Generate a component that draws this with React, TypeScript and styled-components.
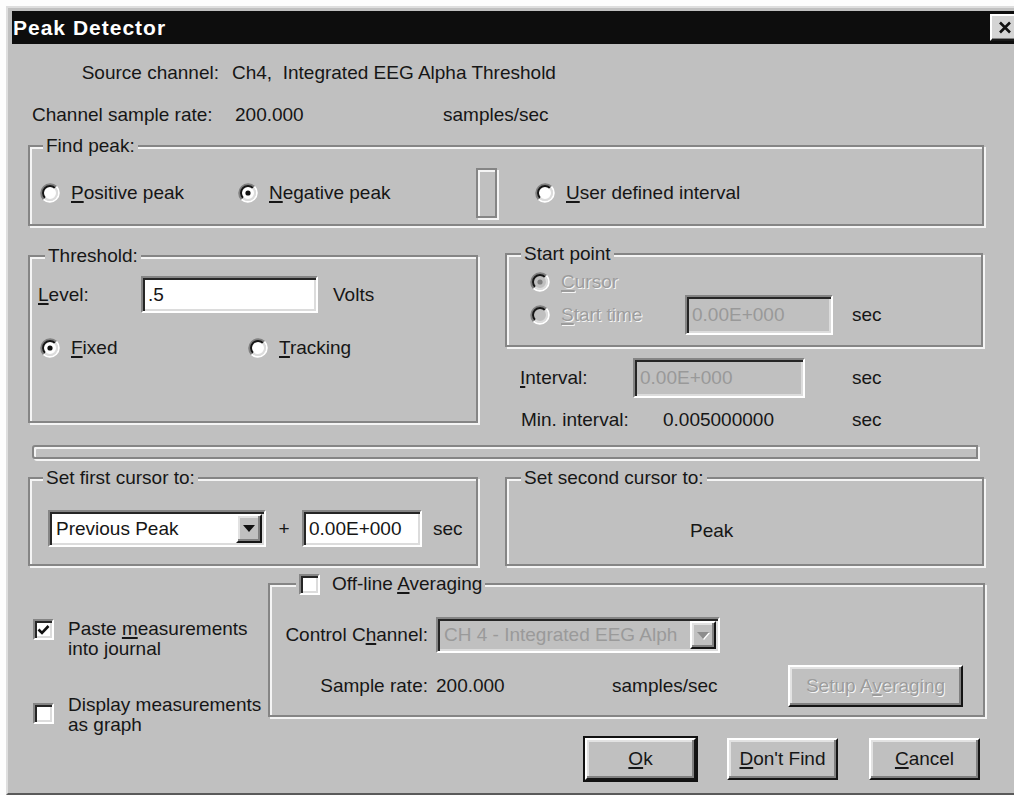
import React from "react";
import styled, { createGlobalStyle, css } from "styled-components";

const FACE = "#c0c0c0";
const SHADOW = "#858585";
const LIGHT = "#f4f4f4";
const INK = "#161616";
const MUTED = "#8c8c8c";

const GlobalStyle = createGlobalStyle`
  html, body { margin: 0; padding: 0; background: #fdfdfd; overflow: hidden; }
  body { font-family: "Liberation Sans", Arial, sans-serif; }
`;

const Window = styled.div`
  box-sizing: border-box;
  width: 1030px;
  height: 789px;
  margin: 6px 0 0 6px;
  padding: 3px 4px 0;
  display: flex;
  flex-direction: column;
  background: ${FACE};
  border: 2px solid #dedede;
  border-right-color: #3a3a3a;
  border-bottom-color: #5a5a5a;
  color: ${INK};
  font-size: 19px;
  line-height: 22px;
`;

const TitleBar = styled.div`
  flex: none;
  height: 33px;
  display: flex;
  align-items: center;
  justify-content: space-between;
  padding-left: 1px;
  background: #0d0d0d;
`;

const Title = styled.span`
  color: #fff;
  font-weight: 700;
  font-size: 21px;
  letter-spacing: 1px;
`;

const CloseButton = styled.span`
  box-sizing: border-box;
  width: 30px;
  height: 27px;
  margin-right: 10px;
  display: flex;
  align-items: center;
  justify-content: center;
  background: #d4d4d4;
  border: 2px solid;
  border-color: #fff #1a1a1a #1a1a1a #fff;
  box-shadow: inset -1px -1px 0 #808080;
`;

const Body = styled.div`
  flex: 1;
  display: flex;
  flex-direction: column;
  align-items: flex-start;
`;

const InfoRow = styled.div<{ $top: number; $left?: number; $gap?: number }>`
  display: flex;
  align-items: center;
  height: 22px;
  margin-top: ${(p) => p.$top}px;
  padding-left: ${(p) => p.$left ?? 0}px;
  gap: ${(p) => p.$gap ?? 0}px;
  white-space: nowrap;
`;

const InfoCell = styled.span<{ $w?: number; $right?: boolean }>`
  flex: none;
  ${(p) => p.$w && css`width: ${p.$w}px;`}
  text-align: ${(p) => (p.$right ? "right" : "left")};
`;

const GroupBox = styled.div<{ $w: number; $h: number; $top?: number; $left?: number }>`
  position: relative;
  flex: none;
  box-sizing: border-box;
  width: ${(p) => p.$w}px;
  height: ${(p) => p.$h}px;
  margin-top: ${(p) => p.$top ?? 0}px;
  margin-left: ${(p) => p.$left ?? 0}px;
  border: 2px solid ${SHADOW};
  box-shadow: inset 2px 2px 0 ${LIGHT}, 2px 2px 0 ${LIGHT};
`;

// group caption sits over the top edge of its frame
const Caption = styled.span<{ $left: number }>`
  position: absolute;
  top: -12px;
  left: ${(p) => p.$left}px;
  height: 22px;
  display: flex;
  align-items: center;
  gap: 12px;
  padding: 0 3px;
  background: ${FACE};
  white-space: nowrap;
`;

const ChoiceRow = styled.div<{ $top?: number; $left?: number; $h?: number }>`
  display: flex;
  align-items: center;
  height: ${(p) => p.$h ?? 22}px;
  margin-top: ${(p) => p.$top ?? 0}px;
  padding-left: ${(p) => p.$left ?? 0}px;
  white-space: nowrap;
`;

const RadioItem = styled.label<{ $w?: number }>`
  flex: none;
  display: flex;
  align-items: center;
  gap: 11px;
  ${(p) => p.$w && css`width: ${p.$w}px;`}
`;

const Notch = styled.span`
  flex: none;
  box-sizing: border-box;
  width: 21px;
  height: 50px;
  margin-right: 38px;
  border: 2px solid ${SHADOW};
  box-shadow: inset 2px 2px 0 ${LIGHT}, 2px 2px 0 ${LIGHT};
`;

const FieldLabel = styled.span<{ $w: number; $right?: boolean }>`
  flex: none;
  box-sizing: border-box;
  width: ${(p) => p.$w}px;
  ${(p) =>
    p.$right &&
    css`
      text-align: right;
      padding-right: 8px;
    `}
`;

const sunken = css`
  border: 2px solid;
  border-color: ${SHADOW} #fff #fff ${SHADOW};
  box-shadow: inset 2px 2px 0 #262626, inset -2px -2px 0 #dcdcdc;
`;

const raised = css`
  border: 2px solid;
  border-color: #fff #141414 #141414 #fff;
  box-shadow: inset -2px -2px 0 #808080, inset 2px 2px 0 #e2e2e2;
`;

const TextField = styled.span<{ $w: number; $h: number; $disabled?: boolean }>`
  flex: none;
  box-sizing: border-box;
  width: ${(p) => p.$w}px;
  height: ${(p) => p.$h}px;
  display: flex;
  align-items: center;
  padding-left: 5px;
  background: ${(p) => (p.$disabled ? FACE : "#fff")};
  color: ${(p) => (p.$disabled ? "#999" : INK)};
  ${sunken}
`;

const Unit = styled.span<{ $left: number }>`
  flex: none;
  margin-left: ${(p) => p.$left}px;
`;

const Columns = styled.div<{ $top: number; $h?: number }>`
  flex: none;
  display: flex;
  align-items: flex-start;
  margin-top: ${(p) => p.$top}px;
  ${(p) => p.$h && css`height: ${p.$h}px;`}
`;

const Column = styled.div<{ $left: number; $w: number }>`
  display: flex;
  flex-direction: column;
  align-items: flex-start;
  width: ${(p) => p.$w}px;
  margin-left: ${(p) => p.$left}px;
`;

const Groove = styled.div`
  flex: none;
  box-sizing: border-box;
  width: 946px;
  height: 14px;
  margin: 14px 0 0 20px;
  border: 2px solid ${SHADOW};
  border-radius: 3px 0 0 3px;
  box-shadow: inset 2px 2px 0 ${LIGHT}, 2px 2px 0 ${LIGHT};
`;

const Combo = styled.span<{ $w: number; $h: number; $disabled?: boolean }>`
  flex: none;
  box-sizing: border-box;
  width: ${(p) => p.$w}px;
  height: ${(p) => p.$h}px;
  display: flex;
  padding: 2px;
  background: ${(p) => (p.$disabled ? FACE : "#fff")};
  color: ${(p) => (p.$disabled ? "#9a9a9a" : INK)};
  ${sunken}
`;

const ComboText = styled.span`
  flex: 1;
  display: flex;
  align-items: center;
  padding-left: 4px;
  white-space: nowrap;
`;

const ComboArrow = styled.span<{ $disabled?: boolean }>`
  flex: none;
  box-sizing: border-box;
  width: 26px;
  display: flex;
  align-items: center;
  justify-content: center;
  background: ${FACE};
  ${raised}

  &::after {
    content: "";
    border-left: 6px solid transparent;
    border-right: 6px solid transparent;
    border-top: 7px solid ${(p) => (p.$disabled ? MUTED : "#111")};
    ${(p) => p.$disabled && css`filter: drop-shadow(1px 1px 0 #fff);`}
  }
`;

const Plus = styled.span`
  flex: none;
  width: 36px;
  text-align: center;
`;

const ReadOut = styled.div`
  padding: 41px 0 0 183px;
`;

const CheckRow = styled.label<{ $top: number; $left: number }>`
  display: flex;
  align-items: flex-start;
  gap: 14px;
  margin-top: ${(p) => p.$top}px;
  padding-left: ${(p) => p.$left}px;
  line-height: 20px;
`;

const CheckBox = styled.span<{ $top?: number }>`
  flex: none;
  box-sizing: border-box;
  width: 21px;
  height: 21px;
  margin-top: ${(p) => p.$top ?? 0}px;
  display: flex;
  align-items: center;
  justify-content: center;
  background: #fff;
  ${sunken}
`;

const ButtonRow = styled.div`
  box-sizing: border-box;
  width: 100%;
  margin-top: 21px;
  padding-right: 5px;
  display: flex;
  justify-content: flex-end;
  gap: 31px;
`;

const PushButton = styled.button<{ $w: number; $h?: number; $default?: boolean }>`
  flex: none;
  box-sizing: border-box;
  width: ${(p) => p.$w}px;
  height: ${(p) => p.$h ?? 42}px;
  padding: 0;
  display: flex;
  align-items: center;
  justify-content: center;
  font: inherit;
  color: ${INK};
  background: ${FACE};
  ${raised}
  ${(p) => p.$default && css`outline: 2px solid #111;`}
`;

const Dim = styled.span`
  color: #9c9c9c;
  text-shadow: 1px 1px 0 #f6f6f6;
`;

const Key = styled.u`
  text-decoration-thickness: 1.5px;
  text-underline-offset: 2px;
`;

function Radio({ checked, disabled }: { checked?: boolean; disabled?: boolean }) {
  return (
    <svg width="20" height="20" viewBox="0 0 20 20" style={{ flex: "none" }}>
      <circle cx="10" cy="10" r="7" fill={disabled ? FACE : "#fff"} />
      <path d="M3.64 16.36A9 9 0 0 1 16.36 3.64" stroke="#808080" strokeWidth="2" fill="none" />
      <path d="M16.36 3.64A9 9 0 0 1 3.64 16.36" stroke="#fff" strokeWidth="2" fill="none" />
      <path d="M5.05 14.95A7 7 0 0 1 14.95 5.05" stroke="#161616" strokeWidth="2" fill="none" />
      <path d="M14.95 5.05A7 7 0 0 1 5.05 14.95" stroke="#dcdcdc" strokeWidth="2" fill="none" />
      {checked && <circle cx="10" cy="10" r="2.6" fill={disabled ? "#808080" : "#111"} />}
    </svg>
  );
}

function Check({ on, top }: { on?: boolean; top?: number }) {
  return (
    <CheckBox $top={top}>
      {on && (
        <svg width="13" height="12" viewBox="0 0 13 12">
          <path d="M1.5 5.5 L5 9 L11.5 2" stroke="#111" strokeWidth="2.6" fill="none" />
        </svg>
      )}
    </CheckBox>
  );
}

export default function App() {
  return (
    <>
      <GlobalStyle />
      <Window>
        <TitleBar>
          <Title>Peak Detector</Title>
          <CloseButton>
            <svg width="14" height="13" viewBox="0 0 14 13">
              <path d="M2 1.5 L12 11.5 M12 1.5 L2 11.5" stroke="#111" strokeWidth="2.6" />
            </svg>
          </CloseButton>
        </TitleBar>

        <Body>
          <InfoRow $top={18} $gap={13}>
            <InfoCell $w={207} $right>
              Source channel:
            </InfoCell>
            <InfoCell>Ch4,{"\u00a0"} Integrated EEG Alpha Threshold</InfoCell>
          </InfoRow>
          <InfoRow $top={20} $left={20}>
            <InfoCell $w={203}>Channel sample rate:</InfoCell>
            <InfoCell $w={208}>200.000</InfoCell>
            <InfoCell>samples/sec</InfoCell>
          </InfoRow>

          <GroupBox $w={956} $h={81} $top={19} $left={16}>
            <Caption $left={13}>Find peak:</Caption>
            <ChoiceRow $top={21} $left={10} $h={50}>
              <RadioItem $w={198}>
                <Radio />
                <span>
                  <Key>P</Key>ositive peak
                </span>
              </RadioItem>
              <RadioItem $w={238}>
                <Radio checked />
                <span>
                  <Key>N</Key>egative peak
                </span>
              </RadioItem>
              <Notch />
              <RadioItem>
                <Radio />
                <span>
                  <Key>U</Key>ser defined interval
                </span>
              </RadioItem>
            </ChoiceRow>
          </GroupBox>

          <Columns $top={27} $h={178}>
            <Column $left={16} $w={450}>
              <GroupBox $w={450} $h={168} $top={2}>
                <Caption $left={15}>Threshold:</Caption>
                <ChoiceRow $top={19} $left={8} $h={37}>
                  <FieldLabel $w={103}>
                    <Key>L</Key>evel:
                  </FieldLabel>
                  <TextField $w={177} $h={37}>
                    .5
                  </TextField>
                  <Unit $left={15}>Volts</Unit>
                </ChoiceRow>
                <ChoiceRow $top={24} $left={10}>
                  <RadioItem $w={208}>
                    <Radio checked />
                    <span>
                      <Key>F</Key>ixed
                    </span>
                  </RadioItem>
                  <RadioItem>
                    <Radio />
                    <span>
                      <Key>T</Key>racking
                    </span>
                  </RadioItem>
                </ChoiceRow>
              </GroupBox>
            </Column>

            <Column $left={27} $w={479}>
              <GroupBox $w={478} $h={94}>
                <Caption $left={14}>Start point</Caption>
                <ChoiceRow $top={16} $left={23}>
                  <RadioItem>
                    <Radio checked disabled />
                    <Dim>
                      <Key>C</Key>ursor
                    </Dim>
                  </RadioItem>
                </ChoiceRow>
                <ChoiceRow $top={2} $left={23} $h={40}>
                  <RadioItem $w={155}>
                    <Radio disabled />
                    <Dim>
                      <Key>S</Key>tart time
                    </Dim>
                  </RadioItem>
                  <TextField $w={148} $h={40} $disabled>
                    0.00E+000
                  </TextField>
                  <Unit $left={19}>sec</Unit>
                </ChoiceRow>
              </GroupBox>
              <ChoiceRow $top={11} $left={15} $h={40}>
                <FieldLabel $w={113}>
                  <Key>I</Key>nterval:
                </FieldLabel>
                <TextField $w={172} $h={40} $disabled>
                  0.00E+000
                </TextField>
                <Unit $left={47}>sec</Unit>
              </ChoiceRow>
              <ChoiceRow $top={11} $left={16}>
                <FieldLabel $w={142}>Min. interval:</FieldLabel>
                <FieldLabel $w={189}>0.005000000</FieldLabel>
                <span>sec</span>
              </ChoiceRow>
            </Column>
          </Columns>

          <Groove />

          <Columns $top={18} $h={89}>
            <Column $left={16} $w={450}>
              <GroupBox $w={450} $h={89}>
                <Caption $left={13}>Set first cursor to:</Caption>
                <ChoiceRow $top={31} $left={18} $h={37}>
                  <Combo $w={218} $h={37}>
                    <ComboText>Previous Peak</ComboText>
                    <ComboArrow />
                  </Combo>
                  <Plus>+</Plus>
                  <TextField $w={120} $h={37}>
                    0.00E+000
                  </TextField>
                  <Unit $left={11}>sec</Unit>
                </ChoiceRow>
              </GroupBox>
            </Column>
            <Column $left={27} $w={479}>
              <GroupBox $w={479} $h={89}>
                <Caption $left={14}>Set second cursor to:</Caption>
                <ReadOut>Peak</ReadOut>
              </GroupBox>
            </Column>
          </Columns>

          <Columns $top={0}>
            <Column $left={0} $w={256}>
              <CheckRow $top={53} $left={21}>
                <Check on />
                <span>
                  Paste <Key>m</Key>easurements
                  <br />
                  into journal
                </span>
              </CheckRow>
              <CheckRow $top={36} $left={21}>
                <Check top={8} />
                <span>
                  Display measurements
                  <br />
                  as graph
                </span>
              </CheckRow>
            </Column>
            <Column $left={0} $w={717}>
              <GroupBox $w={717} $h={134} $top={17}>
                <Caption $left={26}>
                  <Check />
                  <span>
                    Off-line <Key>A</Key>veraging
                  </span>
                </Caption>
                <ChoiceRow $top={32} $left={10} $h={36}>
                  <FieldLabel $w={156} $right>
                    Control C<Key>h</Key>annel:
                  </FieldLabel>
                  <Combo $w={284} $h={36} $disabled>
                    <ComboText>CH 4 - Integrated EEG Alph</ComboText>
                    <ComboArrow $disabled />
                  </Combo>
                </ChoiceRow>
                <ChoiceRow $top={12} $left={10} $h={42}>
                  <FieldLabel $w={156} $right>
                    Sample rate:
                  </FieldLabel>
                  <FieldLabel $w={176}>200.000</FieldLabel>
                  <FieldLabel $w={176}>samples/sec</FieldLabel>
                  <PushButton type="button" $w={175} disabled>
                    <Dim>
                      Setup A<Key>v</Key>eraging
                    </Dim>
                  </PushButton>
                </ChoiceRow>
              </GroupBox>
              <ButtonRow>
                <PushButton type="button" $w={111} $default>
                  <span>
                    <Key>O</Key>k
                  </span>
                </PushButton>
                <PushButton type="button" $w={111}>
                  <span>
                    <Key>D</Key>on't Find
                  </span>
                </PushButton>
                <PushButton type="button" $w={111}>
                  <span>
                    <Key>C</Key>ancel
                  </span>
                </PushButton>
              </ButtonRow>
            </Column>
          </Columns>
        </Body>
      </Window>
    </>
  );
}
